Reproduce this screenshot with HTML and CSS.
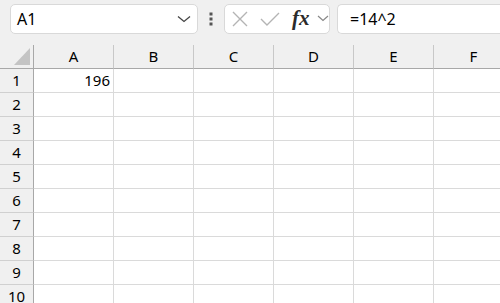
FILE: index.html
```html
<!DOCTYPE html>
<html lang="en">
<head>
    <meta charset="UTF-8">
    <title>Sheet</title>
    <link rel="stylesheet" href="styles.css">
</head>
<body>
    <div class="toolbar">
        <div class="namebox">
            <span class="name">A1</span>
            <svg class="chev" width="14" height="8" viewBox="0 0 14 8"><path d="M1 1.5 L7 6.5 L13 1.5" fill="none" stroke="#444" stroke-width="1.3"/></svg>
        </div>
        <svg class="grip" width="4" height="14" viewBox="0 0 4 14"><rect x="0.5" y="0.5" width="3" height="3" fill="#555"/><rect x="0.5" y="5.5" width="3" height="3" fill="#555"/><rect x="0.5" y="10.5" width="3" height="3" fill="#555"/></svg>
        <div class="actions">
            <svg class="cancel" width="18" height="18" viewBox="0 0 18 18"><path d="M2 2 L16 16 M16 2 L2 16" stroke="#b4b4b4" stroke-width="1.4" fill="none"/></svg>
            <svg class="enter" width="20" height="14" viewBox="0 0 20 14"><path d="M1 7 L7 13 L19 1" stroke="#b4b4b4" stroke-width="1.4" fill="none"/></svg>
            <span class="fx">fx</span>
            <svg class="chev-sm" width="12" height="7" viewBox="0 0 12 7"><path d="M1 1 L6 5.5 L11 1" fill="none" stroke="#888" stroke-width="1.2"/></svg>
        </div>
        <div class="formula">=14^2</div>
    </div>

    <div class="grid">
        <div class="corner"><span class="tri"></span></div>
        <div class="colhead">A</div>
        <div class="colhead">B</div>
        <div class="colhead">C</div>
        <div class="colhead">D</div>
        <div class="colhead">E</div>
        <div class="colhead">F</div>

        <div class="rowhead">1</div>
        <div class="cell num">196</div><div class="cell"></div><div class="cell"></div><div class="cell"></div><div class="cell"></div><div class="cell"></div>
        <div class="rowhead">2</div>
        <div class="cell"></div><div class="cell"></div><div class="cell"></div><div class="cell"></div><div class="cell"></div><div class="cell"></div>
        <div class="rowhead">3</div>
        <div class="cell"></div><div class="cell"></div><div class="cell"></div><div class="cell"></div><div class="cell"></div><div class="cell"></div>
        <div class="rowhead">4</div>
        <div class="cell"></div><div class="cell"></div><div class="cell"></div><div class="cell"></div><div class="cell"></div><div class="cell"></div>
        <div class="rowhead">5</div>
        <div class="cell"></div><div class="cell"></div><div class="cell"></div><div class="cell"></div><div class="cell"></div><div class="cell"></div>
        <div class="rowhead">6</div>
        <div class="cell"></div><div class="cell"></div><div class="cell"></div><div class="cell"></div><div class="cell"></div><div class="cell"></div>
        <div class="rowhead">7</div>
        <div class="cell"></div><div class="cell"></div><div class="cell"></div><div class="cell"></div><div class="cell"></div><div class="cell"></div>
        <div class="rowhead">8</div>
        <div class="cell"></div><div class="cell"></div><div class="cell"></div><div class="cell"></div><div class="cell"></div><div class="cell"></div>
        <div class="rowhead">9</div>
        <div class="cell"></div><div class="cell"></div><div class="cell"></div><div class="cell"></div><div class="cell"></div><div class="cell"></div>
        <div class="rowhead">10</div>
        <div class="cell"></div><div class="cell"></div><div class="cell"></div><div class="cell"></div><div class="cell"></div><div class="cell"></div>
    </div>
</body>
</html>
```

FILE: styles.css
```css
body {
    margin: 0;
    width: 500px;
    height: 303px;
    overflow: hidden;
    background-color: #f0f0f0;
    font-family: "Noto Sans", "Open Sans", sans-serif;
    font-size: 15px;
    color: #000;
}
.toolbar {
    display: flex;
    align-items: center;
    height: 45px;
    padding: 0 0 8px 10px;
    box-sizing: border-box;
}
.namebox {
    display: flex;
    align-items: center;
    justify-content: space-between;
    width: 188px;
    height: 30px;
    box-sizing: border-box;
    padding: 0 6px 0 6px;
    background-color: #fff;
    border: 1px solid #d9d9d9;
    border-radius: 5px;
    font-size: 16px;
}
.name {
    line-height: 1;
}
.grip {
    margin: 0 11px 0 11px;
}
.actions {
    display: flex;
    align-items: center;
    width: 106px;
    height: 30px;
    box-sizing: border-box;
    padding-left: 6px;
    background-color: #fff;
    border: 1px solid #d9d9d9;
    border-radius: 5px;
}
.enter {
    margin-left: 11px;
}
.fx {
    margin-left: 12px;
    font-family: "Liberation Serif", serif;
    font-style: italic;
    font-weight: bold;
    font-size: 21px;
    line-height: 1;
    color: #2b2b2b;
}
.chev-sm {
    margin-left: 7px;
}
.formula {
    flex: 1;
    height: 30px;
    box-sizing: border-box;
    margin-left: 7px;
    padding-left: 12px;
    line-height: 28px;
    font-size: 16px;
    background-color: #fff;
    border: 1px solid #d9d9d9;
    border-right: none;
    border-radius: 5px 0 0 5px;
}
.grid {
    display: grid;
    grid-template-columns: 34px repeat(6, 80px);
    grid-auto-rows: 24px;
    background-color: #fff;
}
.corner,
.colhead,
.rowhead,
.cell {
    box-sizing: border-box;
    border-right: 1px solid #dadada;
    border-bottom: 1px solid #dadada;
}
.corner {
    position: relative;
    background-color: #f0f0f0;
    border-right-color: #a8a8a8;
    border-bottom-color: #a8a8a8;
}
.tri {
    position: absolute;
    right: 3px;
    bottom: 3px;
    width: 0;
    height: 0;
    border-left: 16px solid transparent;
    border-bottom: 17px solid #c4c4c4;
}
.colhead {
    background-color: #f0f0f0;
    border-right-color: #c8c8c8;
    border-bottom-color: #a8a8a8;
    text-align: center;
    line-height: 23px;
}
.rowhead {
    background-color: #f0f0f0;
    border-right-color: #a8a8a8;
    border-bottom-color: #d0d0d0;
    text-align: center;
    line-height: 23px;
}
.cell {
    line-height: 23px;
    padding: 0 3px;
}
.num {
    text-align: right;
}
```
